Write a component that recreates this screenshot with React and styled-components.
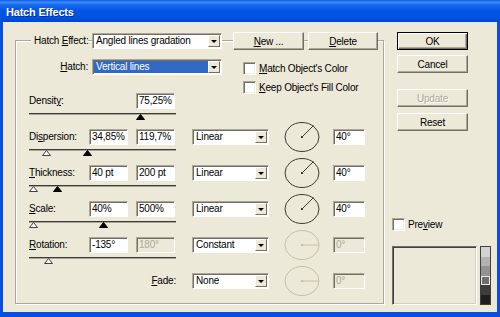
import React from 'react'
import styled, { createGlobalStyle } from 'styled-components'

const GlobalStyle = createGlobalStyle`
  body {
    margin: 0;
    font-family: "Liberation Sans", Arial, sans-serif;
    font-size: 10px;
    letter-spacing: -0.2px;
    color: #000;
  }
`

const Window = styled.div`
  width: 500px;
  height: 317px;
  display: flex;
  flex-direction: column;
  background: #0a4ddf;
  overflow: hidden;
`

const TitleBar = styled.div`
  flex: none;
  height: 22px;
  box-sizing: border-box;
  padding: 1px 0 0 6px;
  display: flex;
  align-items: center;
  background: linear-gradient(#0a5be8 0%, #3b8cf5 10%, #1968ee 22%, #0055e5 50%, #0052e2 80%, #0045d3 100%);
  color: #fff;
  font-size: 11px;
  font-weight: bold;
  text-shadow: 1px 1px 0 #0a2a9b;
`

const Body = styled.div`
  flex: 1;
  margin: 0 3px 5px;
  padding: 10px 0 0 12px;
  background: #ece9d8;
  display: flex;
  align-items: flex-start;
  gap: 8px;
`

const Group = styled.div`
  width: 369px;
  box-sizing: border-box;
  margin-top: 8px;
  padding: 0 0 14px 13px;
  border: 1px solid #aca899;
  box-shadow: inset 1px 1px 0 #fff, 1px 1px 0 #fff;
`

const Header = styled.div`
  display: flex;
  align-items: center;
  height: 18px;
  margin: -9px 0 0 2px;
`

const Legend = styled.div`
  width: 57px;
  flex: none;
  box-sizing: border-box;
  padding-left: 3px;
  background: #ece9d8;
  line-height: 14px;
  white-space: nowrap;
`

const Spacer = styled.div`
  flex: none;
  width: ${p => p.$w}px;
`

const Text = styled.span`
  white-space: nowrap;
`

const Key = styled.span`
  text-decoration: underline;
`

const Button = styled.div`
  flex: none;
  width: ${p => p.$w || 71}px;
  height: 18px;
  box-sizing: border-box;
  display: flex;
  align-items: center;
  justify-content: center;
  background: #ece9d8;
  border: 1px solid;
  border-color: ${p => (p.$default ? '#000' : '#fff #716f64 #716f64 #fff')};
  box-shadow: ${p =>
    p.$default
      ? 'inset 1px 1px 0 #fff, inset -1px -1px 0 #716f64, inset -2px -2px 0 #aca899'
      : 'inset -1px -1px 0 #aca899'};
  color: ${p => (p.$disabled ? '#aca899' : '#000')};
  text-shadow: ${p => (p.$disabled ? '1px 1px 0 #fff' : 'none')};
  margin-top: ${p => p.$mt || 0}px;
`

const Select = styled.div`
  flex: none;
  width: ${p => p.$w}px;
  height: 16px;
  box-sizing: border-box;
  display: flex;
  padding: 1px;
  background: #fff;
  border: 1px solid;
  border-color: #aca899 #fff #fff #aca899;
  box-shadow: inset 1px 1px 0 #716f64;
`

const SelectText = styled.div`
  flex: 1;
  padding-left: 2px;
  line-height: 12px;
  white-space: nowrap;
  overflow: hidden;
  background: ${p => (p.$selected ? '#316ac5' : 'transparent')};
  color: ${p => (p.$selected ? '#fff' : '#000')};
`

const SelectArrow = styled.div`
  flex: none;
  width: 12px;
  box-sizing: border-box;
  display: flex;
  align-items: center;
  justify-content: center;
  background: #ece9d8;
  border: 1px solid;
  border-color: #fff #716f64 #716f64 #fff;

  &::after {
    content: '';
    border-left: 3px solid transparent;
    border-right: 3px solid transparent;
    border-top: 3px solid #000;
  }
`

const HatchRow = styled.div`
  display: flex;
  align-items: flex-start;
  height: 34px;
  margin-top: 9px;
`

const RightLabel = styled.div`
  width: ${p => p.$w}px;
  box-sizing: border-box;
  padding-right: ${p => p.$pr}px;
  text-align: right;
  line-height: 16px;
  white-space: nowrap;
`

const Checks = styled.div`
  display: flex;
  flex-direction: column;
  gap: 6px;
  margin: 3px 0 0 21px;
`

const CheckRow = styled.div`
  display: flex;
  align-items: center;
  gap: 3px;
  height: 13px;
  white-space: nowrap;
`

const CheckBox = styled.span`
  flex: none;
  width: 13px;
  height: 13px;
  box-sizing: border-box;
  background: #fff;
  border: 1px solid;
  border-color: #aca899 #fff #fff #aca899;
  box-shadow: inset 1px 1px 0 #716f64, inset -1px -1px 0 #f1efe2;
`

const Block = styled.div`
  display: grid;
  grid-template-columns: 60px 47px 56px 92px 49px 32px;
  grid-template-rows: 16px ${p => (p.$last ? '' : '20px')};
  align-items: center;
`

const Cell = styled.div`
  grid-column: ${p => p.$col};
  grid-row: 1;
  line-height: 16px;
  white-space: nowrap;
`

const Field = styled.div`
  width: ${p => p.$w || 39}px;
  height: 16px;
  box-sizing: border-box;
  padding-left: 2px;
  line-height: 14px;
  white-space: nowrap;
  overflow: hidden;
  border: 1px solid;
  border-color: #aca899 #fff #fff #aca899;
  box-shadow: inset 1px 1px 0 #716f64;
  background: ${p => (p.$disabled ? '#ece9d8' : '#fff')};
  color: ${p => (p.$disabled ? '#aca899' : '#000')};
`

const DialBox = styled.svg`
  display: block;
  margin: -7px 0;
`

const Track = styled.div`
  grid-column: 1 / 4;
  grid-row: 2;
  align-self: start;
  position: relative;
  width: 147px;
  height: 1px;
  margin-top: 4px;
  background: #3b3a36;
  box-shadow: 0 1px 0 #a9a797;
`

const Thumb = styled.svg`
  position: absolute;
  top: 1px;
`

const Side = styled.div`
  display: flex;
  flex-direction: column;
  width: 99px;
`

const SideButtons = styled.div`
  display: flex;
  flex-direction: column;
  margin-left: 5px;
`

const PreviewRow = styled(CheckRow)`
  margin-top: 87px;
`

const PreviewArea = styled.div`
  display: flex;
  gap: 3px;
  height: 59px;
  margin-top: 15px;
`

const PreviewBox = styled.div`
  width: 85px;
  box-sizing: border-box;
  border: 1px solid;
  border-color: #716f64 #fff #fff #716f64;
  box-shadow: inset 1px 1px 0 #404040, inset -1px -1px 0 #d4d0c8;
`

const Ramp = styled.div`
  width: 11px;
  box-sizing: border-box;
  display: flex;
  flex-direction: column;
  border: 1px solid #404040;
`

const Step = styled.div`
  flex: 1;
  background: ${p => p.$c};
  box-shadow: ${p => (p.$on ? 'inset 0 0 0 1px #e8e8e8' : 'none')};
`

const Label = ({ parts }) => (
  <Text>
    {parts[0]}
    <Key>{parts[1]}</Key>
    {parts[2]}
  </Text>
)

const Dial = ({ on }) => {
  const c = on ? '#3c3b36' : '#c3bfaa'
  return (
    <DialBox width="36" height="30" viewBox="0 0 36 30">
      <ellipse cx="18" cy="15" rx="17" ry="14.5" fill="none" stroke={c} />
      <line x1="18" y1="15" x2={on ? 29.5 : 35} y2={on ? 3.5 : 15} stroke={c} />
      <rect x="17" y="14" width="2" height="2" fill={c} />
    </DialBox>
  )
}

const Slider = ({ thumbs }) => (
  <Track>
    {thumbs.map((t, i) => (
      <Thumb key={i} width="9" height="6" viewBox="0 0 9 6" style={{ left: t.x - 4.5 }}>
        <polygon
          points="4.5,0.5 8.5,5.5 0.5,5.5"
          fill={t.filled ? '#000' : '#fff'}
          stroke={t.filled ? '#000' : '#404040'}
        />
      </Thumb>
    ))}
  </Track>
)

const params = [
  { label: ['Densit', 'y', ':'], values: [null, '75,25%'], thumbs: [{ x: 111, filled: true }] },
  {
    label: ['Di', 's', 'persion:'],
    values: ['34,85%', '119,7%'],
    mode: 'Linear',
    angle: '40°',
    thumbs: [{ x: 17 }, { x: 58, filled: true }],
  },
  {
    label: ['', 'T', 'hickness:'],
    values: ['40 pt', '200 pt'],
    mode: 'Linear',
    angle: '40°',
    thumbs: [{ x: 4 }, { x: 28, filled: true }],
  },
  {
    label: ['', 'S', 'cale:'],
    values: ['40%', '500%'],
    mode: 'Linear',
    angle: '40°',
    thumbs: [{ x: 4 }, { x: 74, filled: true }],
  },
  {
    label: ['', 'R', 'otation:'],
    values: ['-135°', '180°'],
    lockSecond: true,
    mode: 'Constant',
    angle: '0°',
    off: true,
    thumbs: [{ x: 19 }],
  },
]

const ramp = ['#d2d2d2', '#b3b3b3', '#939393', '#6f6f6f', '#3d3d3d', '#1f1f1f']

export default function App() {
  return (
    <>
      <GlobalStyle />
      <Window>
        <TitleBar>Hatch Effects</TitleBar>
        <Body>
          <Group>
            <Header>
              <Legend>
                <Label parts={['Hatch ', 'E', 'ffect:']} />
              </Legend>
              <Spacer $w={4} />
              <Select $w={130}>
                <SelectText>Angled lines gradation</SelectText>
                <SelectArrow />
              </Select>
              <Spacer $w={11} />
              <Button $w={71}>
                <Label parts={['', 'N', 'ew ...']} />
              </Button>
              <Spacer $w={4} />
              <Button $w={70}>
                <Label parts={['', 'D', 'elete']} />
              </Button>
            </Header>

            <HatchRow>
              <RightLabel $w={63} $pr={4}>
                <Label parts={['', 'H', 'atch:']} />
              </RightLabel>
              <Select $w={130}>
                <SelectText $selected>Vertical lines</SelectText>
                <SelectArrow />
              </Select>
              <Checks>
                <CheckRow>
                  <CheckBox />
                  <Label parts={['', 'M', "atch Object's Color"]} />
                </CheckRow>
                <CheckRow>
                  <CheckBox />
                  <Label parts={['', 'K', "eep Object's Fill Color"]} />
                </CheckRow>
              </Checks>
            </HatchRow>

            {params.map((p, i) => (
              <Block key={i}>
                <Cell $col={1}>
                  <Label parts={p.label} />
                </Cell>
                {p.values[0] && (
                  <Cell $col={2}>
                    <Field>{p.values[0]}</Field>
                  </Cell>
                )}
                <Cell $col={3}>
                  <Field $disabled={p.lockSecond}>{p.values[1]}</Field>
                </Cell>
                {p.mode && (
                  <Cell $col={4}>
                    <Select $w={77}>
                      <SelectText>{p.mode}</SelectText>
                      <SelectArrow />
                    </Select>
                  </Cell>
                )}
                {p.angle && (
                  <Cell $col={5}>
                    <Dial on={!p.off} />
                  </Cell>
                )}
                {p.angle && (
                  <Cell $col={6}>
                    <Field $w={32} $disabled={p.off}>
                      {p.angle}
                    </Field>
                  </Cell>
                )}
                <Slider thumbs={p.thumbs} />
              </Block>
            ))}

            <Block $last>
              <Cell $col="1 / 4">
                <RightLabel $w={163} $pr={16}>
                  <Label parts={['', 'F', 'ade:']} />
                </RightLabel>
              </Cell>
              <Cell $col={4}>
                <Select $w={77}>
                  <SelectText>None</SelectText>
                  <SelectArrow />
                </Select>
              </Cell>
              <Cell $col={5}>
                <Dial />
              </Cell>
              <Cell $col={6}>
                <Field $w={32} $disabled>
                  0°
                </Field>
              </Cell>
            </Block>
          </Group>

          <Side>
            <SideButtons>
              <Button $default>OK</Button>
              <Button $mt={5}>Cancel</Button>
              <Button $mt={16} $disabled>
                Update
              </Button>
              <Button $mt={6}>Reset</Button>
            </SideButtons>
            <PreviewRow>
              <CheckBox />
              <Label parts={['Pre', 'v', 'iew']} />
            </PreviewRow>
            <PreviewArea>
              <PreviewBox />
              <Ramp>
                {ramp.map((c, i) => (
                  <Step key={c} $c={c} $on={i === 3} />
                ))}
              </Ramp>
            </PreviewArea>
          </Side>
        </Body>
      </Window>
    </>
  )
}
